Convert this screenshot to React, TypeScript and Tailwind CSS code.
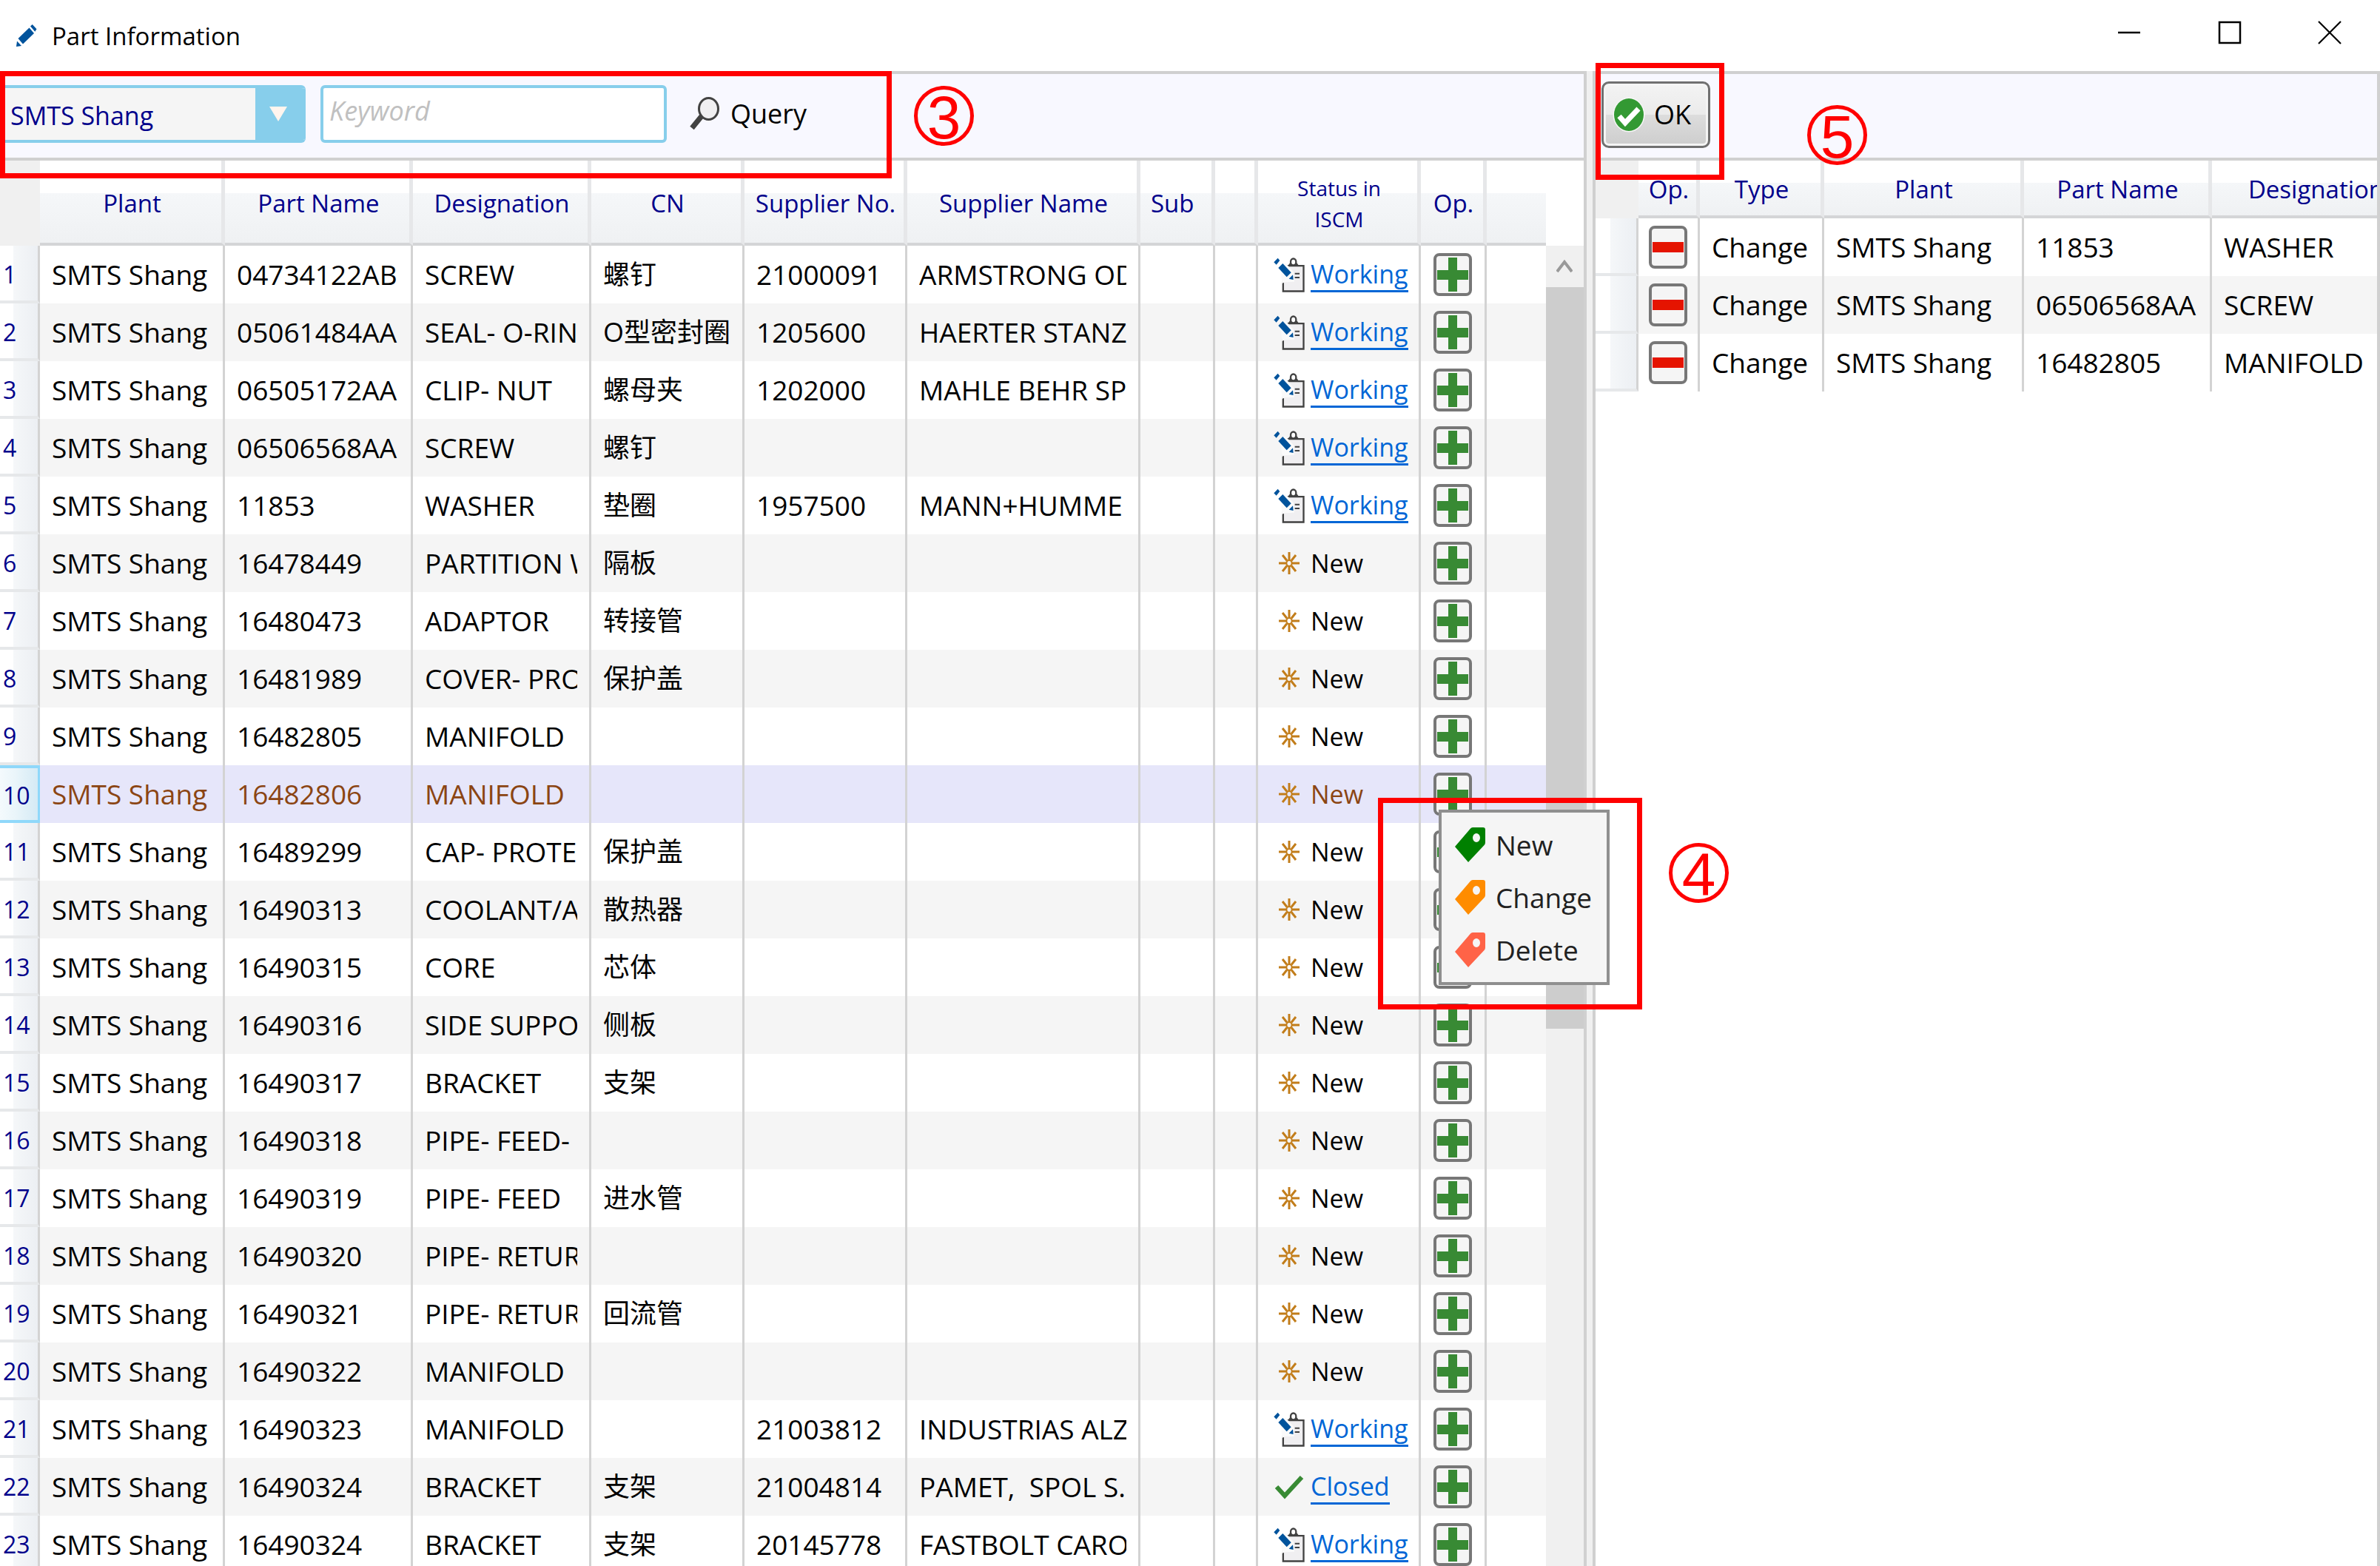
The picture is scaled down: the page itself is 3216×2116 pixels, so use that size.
import React from "react";

type Status = "Working" | "New" | "Closed";
type Part = {
  no: string;
  name: string;
  cn: string;
  supplierNo?: string;
  supplier?: string;
  status: Status;
};

const PLANT = "SMTS Shang";

const parts: Part[] = [
  { no: "04734122AB", name: "SCREW", cn: "螺钉", supplierNo: "21000091", supplier: "ARMSTRONG OD", status: "Working" },
  { no: "05061484AA", name: "SEAL- O-RIN", cn: "O型密封圈", supplierNo: "1205600", supplier: "HAERTER STANZ", status: "Working" },
  { no: "06505172AA", name: "CLIP- NUT", cn: "螺母夹", supplierNo: "1202000", supplier: "MAHLE BEHR SP", status: "Working" },
  { no: "06506568AA", name: "SCREW", cn: "螺钉", status: "Working" },
  { no: "11853", name: "WASHER", cn: "垫圈", supplierNo: "1957500", supplier: "MANN+HUMME", status: "Working" },
  { no: "16478449", name: "PARTITION W", cn: "隔板", status: "New" },
  { no: "16480473", name: "ADAPTOR", cn: "转接管", status: "New" },
  { no: "16481989", name: "COVER- PRO", cn: "保护盖", status: "New" },
  { no: "16482805", name: "MANIFOLD", cn: "", status: "New" },
  { no: "16482806", name: "MANIFOLD", cn: "", status: "New" },
  { no: "16489299", name: "CAP- PROTE", cn: "保护盖", status: "New" },
  { no: "16490313", name: "COOLANT/A", cn: "散热器", status: "New" },
  { no: "16490315", name: "CORE", cn: "芯体", status: "New" },
  { no: "16490316", name: "SIDE SUPPO", cn: "侧板", status: "New" },
  { no: "16490317", name: "BRACKET", cn: "支架", status: "New" },
  { no: "16490318", name: "PIPE- FEED-", cn: "", status: "New" },
  { no: "16490319", name: "PIPE- FEED", cn: "进水管", status: "New" },
  { no: "16490320", name: "PIPE- RETUR", cn: "", status: "New" },
  { no: "16490321", name: "PIPE- RETUR", cn: "回流管", status: "New" },
  { no: "16490322", name: "MANIFOLD", cn: "", status: "New" },
  { no: "16490323", name: "MANIFOLD", cn: "", supplierNo: "21003812", supplier: "INDUSTRIAS ALZ", status: "Working" },
  { no: "16490324", name: "BRACKET", cn: "支架", supplierNo: "21004814", supplier: "PAMET,\u00a0 SPOL S.", status: "Closed" },
  { no: "16490324", name: "BRACKET", cn: "支架", supplierNo: "20145778", supplier: "FASTBOLT CARO", status: "Working" },
];

const chosen = [
  { no: "11853", name: "WASHER" },
  { no: "06506568AA", name: "SCREW" },
  { no: "16482805", name: "MANIFOLD" },
];

const SELECTED = 9;

function PencilIcon() {
  return (
    <svg className="h-[30px] w-[28px]" viewBox="0 0 28 30" fill="#00539c" aria-hidden="true">
      <path d="M2.5 19 17.5 4.5 24 12 9 26.5Z" />
      <path d="M19 2.5 21.7 0 27.5 6.3 25.3 9.7Z" />
      <path d="M0 30 1 22.5 7 29Z" />
    </svg>
  );
}

function SearchIcon() {
  return (
    <svg className="h-[45px] w-[42px]" viewBox="0 0 42 45" aria-hidden="true">
      <path d="M17 26 4 42" stroke="#424242" strokeWidth="7" />
      <ellipse cx="26.5" cy="16" rx="13" ry="14.5" fill="#f0eff1" stroke="#424242" strokeWidth="3" />
    </svg>
  );
}

function OkIcon() {
  return (
    <svg className="h-[48px] w-[44px]" viewBox="0 0 44 48" aria-hidden="true">
      <ellipse cx="22" cy="24" rx="21.5" ry="23.5" fill="#f6f6f6" />
      <ellipse cx="22" cy="24" rx="20" ry="22" fill="#339933" />
      <path d="M9 26 17 35 35 16" fill="none" stroke="#fff" strokeWidth="7" />
    </svg>
  );
}

function WorkingIcon() {
  return (
    <svg className="h-[47px] w-[42px]" viewBox="0 0 126 141" aria-hidden="true">
      <path d="M38.500 33.500H121.500V136.500H38.500Z" fill="#f0eff1" stroke="#424242" strokeWidth="7" />
      <path d="M56 36 66 22H94L105 36Z" fill="#424242" />
      <ellipse cx="80" cy="18" rx="11" ry="13.500" fill="#fff" stroke="#424242" strokeWidth="7" />
      <path d="M86 65H105M86 81H105" stroke="#424242" strokeWidth="6" />
      <path d="M28 30 48 22 82 60 84 98 46 100 34 105Z" fill="#fafafa" />
      <path d="M1 19 17 2 25 12 11 29Z" fill="#00539c" />
      <path d="M19 42 37 24 71 61 53 79Z" fill="#00539c" />
      <path d="M62 86 78 70 80 90Z" fill="#00539c" />
    </svg>
  );
}

function NewIcon() {
  return (
    <svg className="h-[32px] w-[42px]" viewBox="0 0 42 32" stroke="#c27d1a" strokeWidth="3" fill="none" aria-hidden="true">
      <path d="M21 1V12M21 20V31M7 16H17M25 16H35M12 5 18 12.500M30 5 24 12.500M12 27 18 19.500M30 27 24 19.500" />
      <ellipse cx="21" cy="16" rx="3.600" ry="4" strokeWidth="2" />
    </svg>
  );
}

function ClosedIcon() {
  return (
    <svg className="h-[34px] w-[42px]" viewBox="0 0 42 34" aria-hidden="true">
      <path d="M4 17 15 29 38 4" fill="none" stroke="#388a34" strokeWidth="6" />
    </svg>
  );
}

function TagIcon({ color }: { color: string }) {
  return (
    <svg className="h-[47px] w-[41px]" viewBox="0 0 41 47" aria-hidden="true">
      <path
        d="M24 0H38Q41 0 41 3V20Q41 22 40 23.500L18 47 0 26 21 1.500Q22 0 24 0ZM29 8A5 6 0 1 0 29 20A5 6 0 1 0 29 8Z"
        fillRule="evenodd"
        fill={color}
      />
    </svg>
  );
}

const opButton =
  "mx-auto flex h-[58px] w-[52px] items-center justify-center rounded-lg border-4 border-[#777777] bg-[#f5f5f5]";

function AddButton() {
  return (
    <button type="button" aria-label="Add" className={opButton}>
      <svg className="h-[46px] w-[42px] shrink-0" viewBox="0 0 42 46" aria-hidden="true">
        <path d="M15 0H27V17H42V30H27V46H15V30H0V17H15Z" fill="#388a34" />
      </svg>
    </button>
  );
}

function RemoveButton() {
  return (
    <button type="button" aria-label="Remove" className={opButton}>
      <svg className="h-[46px] w-[42px] shrink-0" viewBox="0 0 42 46" aria-hidden="true">
        <path d="M0 16H42V30H0Z" fill="#e51400" />
      </svg>
    </button>
  );
}

function HeadCell({ children, small }: { children?: React.ReactNode; small?: boolean }) {
  return (
    <th
      scope="col"
      className={
        "overflow-hidden whitespace-nowrap border-b-4 border-r-[5px] border-b-[#d4d5d7] border-r-[#e6e7e9] bg-[linear-gradient(#ffffff_0%,#ffffff_40%,#f5f7f9_40%,#eff1f3_100%)] pb-0 pl-1 pr-0 pt-1 text-center font-normal text-[#00008b] " +
        (small ? "text-[28px] leading-[42px]" : "text-[33px] leading-[44px]")
      }
    >
      {children}
    </th>
  );
}

function Cell({ children }: { children?: React.ReactNode }) {
  return (
    <td className="border-r-[3px] border-[#d3d3d3] px-4 py-0">
      <div className="overflow-hidden whitespace-nowrap text-[37px] leading-[52px]">{children}</div>
    </td>
  );
}

function StatusCell({ status }: { status: Status }) {
  return (
    <td className="border-r-[3px] border-[#d3d3d3] py-0 pl-[21px] pr-0">
      <div className="flex items-center gap-2 text-[34px] leading-[48px]">
        {status === "Working" && <WorkingIcon />}
        {status === "New" && <NewIcon />}
        {status === "Closed" && <ClosedIcon />}
        {status === "New" ? (
          <span>New</span>
        ) : (
          <a href="#status" className="border-b-[3px] border-[#0066d6] leading-[44px] text-[#0066d6]">
            {status}
          </a>
        )}
      </div>
    </td>
  );
}

function RowHead({ children, active }: { children?: React.ReactNode; active?: boolean }) {
  return (
    <th
      scope="row"
      className={
        "pb-0 pl-1 pr-0 pt-1 text-left text-[32px] font-normal leading-[44px] text-[#00008b] " +
        (active
          ? "border-y-4 border-r-[3px] border-[#8fd8fa] bg-[linear-gradient(90deg,#f4fafd_0%,#eaf5fa_40%,#d5eaf5_100%)]"
          : "border-b-4 border-r-[3px] border-b-[#e6e8ea] border-r-[#d3d3d3] bg-[linear-gradient(90deg,#ffffff_0%,#ffffff_36%,#f5f7f9_36%,#eceff3_100%)]")
      }
    >
      {children}
    </th>
  );
}

function PartsTable() {
  return (
    <table className="w-full table-fixed border-separate border-spacing-0">
      <colgroup>
        <col className="w-[54px]" />
        <col className="w-[250px]" />
        <col className="w-[254px]" />
        <col className="w-[241px]" />
        <col className="w-[207px]" />
        <col className="w-[220px]" />
        <col className="w-[315px]" />
        <col className="w-[101px]" />
        <col className="w-[58px]" />
        <col className="w-[220px]" />
        <col className="w-[89px]" />
        <col />
      </colgroup>
      <thead>
        <tr className="h-[115px]">
          <td className="bg-[#f0f0f0]" />
          <HeadCell>Plant</HeadCell>
          <HeadCell>Part Name</HeadCell>
          <HeadCell>Designation</HeadCell>
          <HeadCell>CN</HeadCell>
          <HeadCell>Supplier No.</HeadCell>
          <HeadCell>Supplier Name</HeadCell>
          <th
            scope="col"
            className="whitespace-nowrap border-b-4 border-r-[5px] border-b-[#d4d5d7] border-r-[#e6e7e9] bg-[linear-gradient(#ffffff_0%,#ffffff_40%,#f5f7f9_40%,#eff1f3_100%)] pb-0 pl-3.5 pr-0 pt-1 text-left text-[33px] font-normal leading-[44px] text-[#00008b]"
          >
            Sub
          </th>
          <HeadCell />
          <HeadCell small>
            Status in
            <br />
            ISCM
          </HeadCell>
          <HeadCell>Op.</HeadCell>
          <td className="border-b-4 border-[#d4d5d7] bg-[linear-gradient(#ffffff_0%,#ffffff_40%,#f5f7f9_40%,#eff1f3_100%)]" />
        </tr>
      </thead>
      <tbody>
        {parts.map((p, i) => (
          <tr
            key={i}
            className={
              "h-[78px] " +
              (i === SELECTED ? "bg-[#e6e6fa] text-[#8b4513]" : i % 2 ? "bg-[#f5f5f5] text-black" : "bg-white text-black")
            }
          >
            <RowHead active={i === SELECTED}>{i + 1}</RowHead>
            <Cell>{PLANT}</Cell>
            <Cell>{p.no}</Cell>
            <Cell>{p.name}</Cell>
            <td className="border-r-[3px] border-[#d3d3d3] py-0 pl-4 pr-0">
              <div className="whitespace-nowrap text-[36px] leading-[52px]">{p.cn}</div>
            </td>
            <Cell>{p.supplierNo}</Cell>
            <Cell>{p.supplier}</Cell>
            <Cell />
            <Cell />
            <StatusCell status={p.status} />
            <td className="border-r-[3px] border-[#d3d3d3] p-0">
              <AddButton />
            </td>
            <td />
          </tr>
        ))}
      </tbody>
    </table>
  );
}

function ChosenTable() {
  return (
    <table className="w-[1115px] table-fixed border-separate border-spacing-0">
      <colgroup>
        <col className="w-[58px]" />
        <col className="w-[83px]" />
        <col className="w-[168px]" />
        <col className="w-[270px]" />
        <col className="w-[254px]" />
        <col className="w-[282px]" />
      </colgroup>
      <thead>
        <tr className="h-[78px]">
          <td className="bg-[#f0f0f0]" />
          <HeadCell>Op.</HeadCell>
          <HeadCell>Type</HeadCell>
          <HeadCell>Plant</HeadCell>
          <HeadCell>Part Name</HeadCell>
          <HeadCell>Designation</HeadCell>
        </tr>
      </thead>
      <tbody>
        {chosen.map((c, i) => (
          <tr key={c.no} className={"h-[78px] text-black " + (i % 2 ? "bg-[#f5f5f5]" : "bg-white")}>
            <RowHead />
            <td className="border-r-[3px] border-[#d3d3d3] p-0">
              <RemoveButton />
            </td>
            <Cell>Change</Cell>
            <Cell>{PLANT}</Cell>
            <Cell>{c.no}</Cell>
            <td className="px-4 py-0">
              <div className="whitespace-nowrap text-[37px] leading-[52px]">{c.name}</div>
            </td>
          </tr>
        ))}
      </tbody>
    </table>
  );
}

function Scrollbar() {
  return (
    <div className="flex w-[51px] shrink-0 flex-col pt-[115px]">
      <button type="button" aria-label="Scroll up" className="flex h-14 shrink-0 items-center justify-center bg-[#f0f0f0]">
        <svg className="h-[18px] w-[22px]" viewBox="0 0 22 18" aria-hidden="true">
          <path d="M1 16 11 3 21 16" fill="none" stroke="#999999" strokeWidth="4" />
        </svg>
      </button>
      <div className="flex-1 bg-[#f0f0f0]">
        <div className="h-[58%] bg-[#cdcdcd]" />
      </div>
    </div>
  );
}

function ContextMenu() {
  const items = [
    { label: "New", color: "#008000" },
    { label: "Change", color: "#ff8c00" },
    { label: "Delete", color: "#ff6347" },
  ];
  return (
    <div
      role="menu"
      className="absolute left-[1944px] top-[1094px] flex w-[231px] flex-col border-4 border-[#8f8f8f] bg-[#f5f5f5] py-2"
    >
      {items.map((it) => (
        <button
          key={it.label}
          type="button"
          role="menuitem"
          className="flex h-[71px] items-center gap-3.5 pl-[18px] text-[37px] leading-[52px] text-[#212121]"
        >
          <TagIcon color={it.color} />
          {it.label}
        </button>
      ))}
    </div>
  );
}

const calloutNumber =
  "absolute flex h-[81px] w-[81px] items-center justify-center rounded-full border-[5px] border-[#ff0000] pt-1 font-['Liberation_Sans',sans-serif] text-[82px] leading-[72px] text-[#ff0000]";

export default function App() {
  return (
    <div className="relative flex h-screen w-full flex-col overflow-hidden bg-white font-['Open_Sans','Noto_Sans_CJK_SC',sans-serif] text-black">
      <header className="flex h-[96px] shrink-0 items-center justify-between pl-[22px]">
        <div className="flex items-center gap-5">
          <PencilIcon />
          <h1 className="pt-0.5 text-[33px] leading-[44px]">Part Information</h1>
        </div>
        <div className="flex h-full items-center pb-2">
          <button type="button" aria-label="Minimize" className="flex h-full w-[138px] items-center justify-center">
            <svg className="h-[32px] w-[32px]" viewBox="0 0 32 32" aria-hidden="true">
              <path d="M1 16H31" stroke="#000" strokeWidth="2.500" />
            </svg>
          </button>
          <button type="button" aria-label="Maximize" className="flex h-full w-[134px] items-center justify-center">
            <svg className="h-[32px] w-[32px]" viewBox="0 0 32 32" aria-hidden="true">
              <path d="M2 2H30V30H2Z" fill="none" stroke="#000" strokeWidth="2.500" />
            </svg>
          </button>
          <button type="button" aria-label="Close" className="flex h-full w-[136px] items-center justify-center">
            <svg className="h-[32px] w-[32px]" viewBox="0 0 32 32" aria-hidden="true">
              <path d="M1 1 31 31M31 1 1 31" stroke="#000" strokeWidth="2.200" />
            </svg>
          </button>
        </div>
      </header>

      <main className="flex min-h-0 flex-1">
        <section className="flex w-2/3 shrink-0 flex-col border-r-4 border-t-4 border-[#d0d0d0]">
          <form
            className="flex h-[117px] shrink-0 items-center border-b-4 border-[#d0d0d0] bg-[#f8f8ff] pb-1.5"
            onSubmit={(e) => e.preventDefault()}
          >
            <div className="flex h-[78px] w-[413px] overflow-hidden rounded-r-md border-y-4 border-[#87ceeb]">
              <select
                aria-label="Plant"
                className="min-w-0 flex-1 appearance-none bg-[#f5f5f5] pl-3.5 pt-1 text-[34px] leading-[48px] text-[#00008b]"
              >
                <option>{PLANT}</option>
              </select>
              <div className="pointer-events-none flex w-[68px] items-center justify-center bg-[#87ceeb] pr-1.5">
                <svg className="h-[20px] w-[24px]" viewBox="0 0 24 20" aria-hidden="true">
                  <path d="M0 0H24L12 20Z" fill="#fff5ee" />
                </svg>
              </div>
            </div>
            <input
              type="text"
              aria-label="Keyword"
              placeholder="Keyword"
              className="ml-5 h-[78px] w-[468px] rounded-md border-4 border-[#87ceeb] bg-white pb-2 pl-2 text-[36px] italic leading-[52px] placeholder:text-[#c0c0c0]"
            />
            <button type="submit" className="ml-[30px] flex items-center gap-3.5 text-[36px] leading-[52px]">
              <SearchIcon />
              Query
            </button>
          </form>
          <div className="flex min-h-0 flex-1 overflow-hidden">
            <div className="min-w-0 flex-1">
              <PartsTable />
            </div>
            <Scrollbar />
          </div>
        </section>

        <div className="w-2 shrink-0 bg-[#f0f0f0]" />

        <section className="flex min-w-0 flex-1 flex-col border-x-4 border-t-4 border-[#d0d0d0]">
          <div className="flex h-[117px] shrink-0 items-center border-b-4 border-[#d0d0d0] bg-[#f8f8ff] pb-1 pl-2">
            <button
              type="button"
              className="flex h-[90px] w-[147px] items-center gap-3 rounded-[10px] border-[3px] border-[#707070] bg-[linear-gradient(#f3f3f3_0%,#ebebeb_50%,#dddddd_50%,#cdcdcd_100%)] pl-3 text-[36px] leading-[52px] shadow-[inset_0_0_0_3px_#f4f4f4]"
            >
              <OkIcon />
              OK
            </button>
          </div>
          <div className="min-h-0 flex-1 overflow-hidden">
            <ChosenTable />
          </div>
        </section>
      </main>

      <ContextMenu />

      <div className="pointer-events-none absolute left-0 top-[96px] h-[145px] w-[1205px] border-[7px] border-[#ff0000]" />
      <div className="pointer-events-none absolute left-[2156px] top-[85px] h-[158px] w-[174px] border-[7px] border-[#ff0000]" />
      <div className="pointer-events-none absolute left-[1862px] top-[1078px] h-[286px] w-[357px] border-[7px] border-[#ff0000]" />
      <span className={calloutNumber + " left-[1235px] top-[116px]"}>3</span>
      <span className={calloutNumber + " left-[2255px] top-[1139px]"}>4</span>
      <span className={calloutNumber + " left-[2442px] top-[142px]"}>5</span>
    </div>
  );
}
